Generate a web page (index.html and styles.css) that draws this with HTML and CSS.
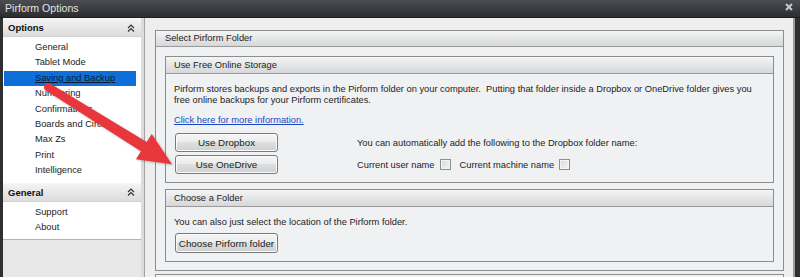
FILE: index.html
```html
<!DOCTYPE html>
<html lang="en">
<head>
<meta charset="UTF-8" />
<title>Pirform Options</title>
<link rel="stylesheet" href="styles.css">
</head>
<body>

<div class="window">
<div class="titlebar">
<span class="title">Pirform Options</span>
<svg class="close" width="8" height="8" viewBox="0 0 8 8"><path d="M1 1L7 7M7 1L1 7" stroke="#c9cbce" stroke-width="2"/></svg>
</div>

<div class="frame">
<aside class="sidebar">
<div class="nav">
<div class="nav-head">
<span>Options</span>
<svg width="8" height="8" viewBox="0 0 8 8"><path d="M1 4L4 1L7 4M1 7.5L4 4.5L7 7.5" fill="none" stroke="#333" stroke-width="1.2"/></svg>
</div>
<ul class="nav-list">
<li>General</li>
<li>Tablet Mode</li>
<li class="selected">Saving and Backup</li>
<li>Numbering</li>
<li>Confirmations</li>
<li>Boards and Circles</li>
<li>Max Zs</li>
<li>Print</li>
<li>Intelligence</li>
</ul>
<div class="nav-head">
<span>General</span>
<svg width="8" height="8" viewBox="0 0 8 8"><path d="M1 4L4 1L7 4M1 7.5L4 4.5L7 7.5" fill="none" stroke="#333" stroke-width="1.2"/></svg>
</div>
<ul class="nav-list">
<li>Support</li>
<li>About</li>
</ul>
</div>
</aside>

<div class="splitter"></div>

<main class="content">
<section class="group">
<div class="group-head">Select Pirform Folder</div>
<div class="group-body">

<section class="group">
<div class="group-head">Use Free Online Storage</div>
<div class="group-body inner-body">
<p class="intro">Pirform stores backups and exports in the Pirform folder on your computer.&nbsp; Putting that folder inside a Dropbox or OneDrive folder gives you<br>free online backups for your Pirform certificates.</p>
<a class="link" href="#">Click here for more information.</a>
<div class="storage-grid">
<button class="btn">Use Dropbox</button>
<span>You can automatically add the following to the Dropbox folder name:</span>
<button class="btn">Use OneDrive</button>
<div class="checks">
<label>Current user name <span class="checkbox"></span></label>
<label>Current machine name <span class="checkbox"></span></label>
</div>
</div>
</div>
</section>

<section class="group folder-group">
<div class="group-head">Choose a Folder</div>
<div class="group-body inner-body">
<p class="folder-text">You can also just select the location of the Pirform folder.</p>
<button class="btn">Choose Pirform folder</button>
</div>
</section>

</div>
</section>

<section class="group next-group">
<div class="group-head">&nbsp;</div>
</section>
</main>
</div>

<svg class="arrow" width="800" height="277" viewBox="0 0 800 277">
<circle cx="48" cy="87" r="4" fill="#e8363d"/>
<polygon points="50.1,83.6 146.7,141.9 151.7,133.9 172,164.2 135.9,159.3 140.9,151.3 45.9,90.4" fill="#e8363d"/>
</svg>
</div>

</body>
</html>
```

FILE: styles.css
```css
* {
box-sizing: border-box;
}

body {
margin: 0;
background: #2e2f31;
font-family: "Liberation Sans", Arial, sans-serif;
font-size: 9.3px;
color: #1c1c1c;
overflow: hidden;
}

.window {
position: relative;
width: 800px;
height: 277px;
display: flex;
flex-direction: column;
}

.titlebar {
height: 18px;
flex: none;
display: flex;
align-items: center;
justify-content: space-between;
padding: 0 5px 1px 5px;
background: linear-gradient(#4a4d52, #2c2d30);
border-bottom: 1px solid #1e1e1e;
}

.title {
color: #e2e2e2;
font-size: 10.6px;
}

.close {
margin-top: -2px;
margin-right: 2px;
}

.frame {
flex: 1;
display: flex;
padding: 0 5px 0 3px;
min-height: 0;
}

/* left navigation */
.sidebar {
width: 138px;
flex: none;
background: #e7e7e7;
}

.nav {
background: #fff;
border-bottom: 1px solid #b4b4b4;
}

.nav-head {
height: 19px;
display: flex;
align-items: center;
justify-content: space-between;
padding: 0 6px 0 5px;
font-weight: bold;
font-size: 9.5px;
color: #111;
background: linear-gradient(#f3f3f3, #dcdcdc);
border-top: 1px solid #f8f8f8;
border-bottom: 1px solid #d0d0d0;
}

.nav-list {
list-style: none;
margin: 0;
padding: 3px 0 4px 0;
}

.nav-list li {
height: 15.4px;
line-height: 15.4px;
padding-left: 31px;
margin: 0 5px 0 1px;
}

.nav-list li.selected {
background: #0f6fd8;
color: #0a1a33;
text-decoration: underline;
}

.splitter {
width: 4px;
flex: none;
background: #dcdcdc;
border-right: 1px solid #a2a2a2;
}

/* right panel */
.content {
flex: 1;
min-width: 0;
background: #eeeeef;
padding: 12px 9px 0 10px;
border-right: 2px solid #9c9c9c;
overflow: hidden;
}

.group {
border: 1px solid #8d8d8d;
background: #f0f1f2;
}

.group-head {
height: 16px;
line-height: 15px;
padding-left: 9px;
background: linear-gradient(#f5f5f5, #d6d7d9);
border-bottom: 1px solid #9a9a9a;
}

.group-body {
padding: 9px 9px 8px 9px;
}

.group .group .group-head {
height: 17px;
line-height: 16px;
padding-left: 8px;
}

.inner-body {
padding: 10px 8px 8px 8px;
}

.intro {
margin: 0 0 9px 0;
line-height: 11px;
}

.link {
display: block;
color: #1b47c4;
text-decoration: underline;
line-height: 11px;
margin-bottom: 7px;
}

.storage-grid {
display: grid;
grid-template-columns: 103px auto;
column-gap: 79px;
row-gap: 3px;
align-items: center;
padding-left: 1px;
}

.btn {
height: 19px;
padding: 0;
font-family: inherit;
font-size: 9.8px;
color: #1c1c1c;
border: 1px solid #7a7a7a;
border-radius: 3px;
background: linear-gradient(#f6f6f6 0%, #ececec 45%, #dedfe0 50%, #cfd0d2 100%);
box-shadow: inset 0 0 0 1px #fbfbfb;
}

.checks {
display: flex;
gap: 9px;
}

.checks label {
display: flex;
align-items: center;
gap: 5px;
}

.checkbox {
display: inline-block;
width: 11px;
height: 11px;
border: 1px solid #8e8f91;
background: linear-gradient(135deg, #d8d9db, #f7f7f7);
box-shadow: inset 0 0 0 1px #f4f4f4;
}

.folder-group {
margin-top: 6px;
}

.folder-text {
margin: 0 0 5px 0;
line-height: 11px;
}

.folder-group .btn {
width: 103px;
height: 20px;
margin-left: 1px;
}

.next-group {
margin-top: 3px;
}

.arrow {
position: absolute;
left: 0;
top: 0;
pointer-events: none;
filter: drop-shadow(1px 1px 1px rgba(0, 0, 0, 0.25));
}
```
